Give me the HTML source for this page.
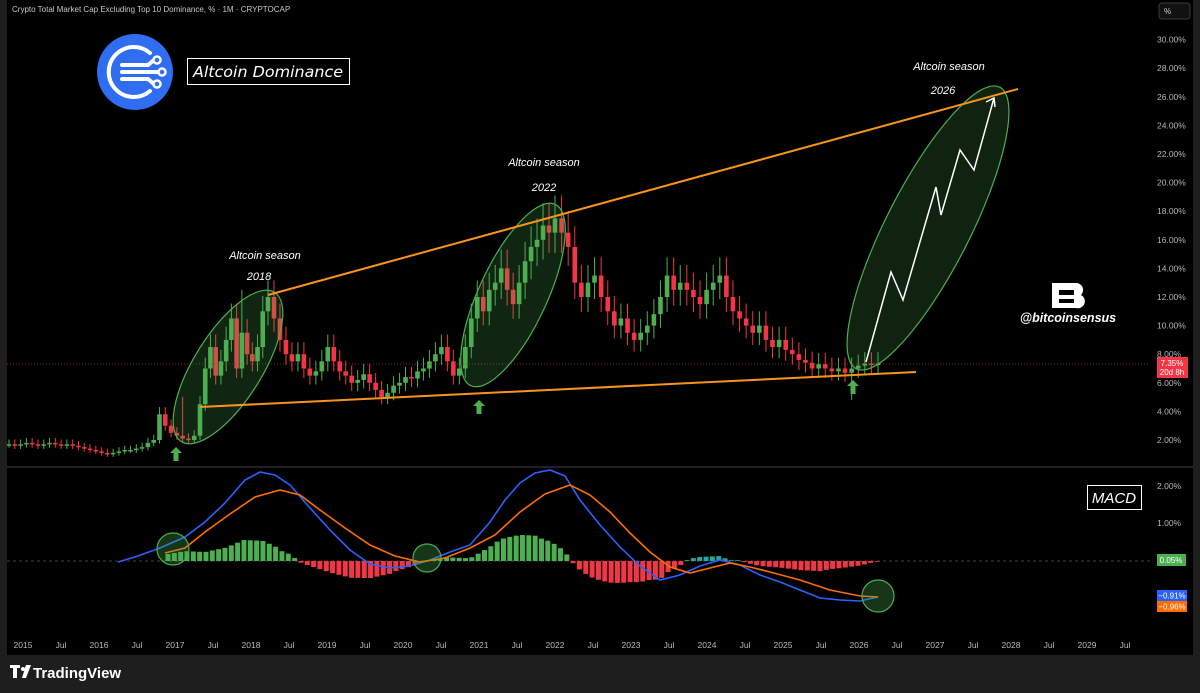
<!DOCTYPE html>
<html><head><meta charset="utf-8"><style>
html,body{margin:0;padding:0;background:#1e1e1e;width:1200px;height:693px;overflow:hidden;font-family:"Liberation Sans",sans-serif}
svg{position:absolute;left:0;top:0}
</style></head><body>
<svg id="s" width="1200" height="693" viewBox="0 0 1200 693" xmlns="http://www.w3.org/2000/svg">
<rect x="0" y="0" width="1200" height="693" fill="#1e1e1e"/>
<rect x="7" y="0" width="1186" height="655" fill="#000"/>
<line x1="7" y1="467" x2="1193" y2="467" fill="none" stroke="#2a2a2a" stroke-width="1.5"/>
<text x="12" y="12" fill="#c8c8c8" font-size="8">Crypto Total Market Cap Excluding Top 10 Dominance, % · 1M · CRYPTOCAP</text>
<rect x="1159" y="3" width="31" height="16" rx="3" fill="#111" stroke="#3a3a3a"/>
<text x="1164" y="14" fill="#ccc" font-size="8">%</text>
<g id="axis" fill="#b8b8b8" font-size="8.5"></g>
<g id="candles"></g>
<line x1="7" y1="364" x2="1150" y2="364" stroke="#b03030" stroke-width="0.8" stroke-dasharray="1,2"/>
<line x1="7" y1="561" x2="1150" y2="561" stroke="#555" stroke-width="0.8" stroke-dasharray="3,3"/>
<ellipse cx="228" cy="367" rx="34" ry="88" transform="rotate(32 228 367)" fill="rgba(76,175,80,0.22)" stroke="#4caf50" stroke-width="1.2"/>
<ellipse cx="513" cy="295" rx="34" ry="100" transform="rotate(25 513 295)" fill="rgba(76,175,80,0.22)" stroke="#4caf50" stroke-width="1.2"/>
<ellipse cx="928" cy="228" rx="42" ry="158" transform="rotate(27 928 228)" fill="rgba(76,175,80,0.2)" stroke="#4caf50" stroke-width="1.2"/>
<line x1="268" y1="295" x2="1018" y2="89" stroke="#f7941d" stroke-width="2"/>
<line x1="200" y1="407" x2="916" y2="372" stroke="#f7941d" stroke-width="2"/>
<polyline points="866,362 891,272 903,300 936,187 941,215 960,150 974,170 994,98" fill="none" stroke="#fff" stroke-width="1.5"/>
<polyline points="986,102 994,98 995,107" fill="none" stroke="#fff" stroke-width="1.5"/>
<g fill="#4caf50">
<path d="M176 447 l6 6 h-3.5 v8 h-5 v-8 h-3.5z"/>
<path d="M479 400 l6 6 h-3.5 v8 h-5 v-8 h-3.5z"/>
<path d="M853 380 l6 6 h-3.5 v8 h-5 v-8 h-3.5z"/>
</g>
<g fill="#fff" font-size="11" font-style="italic" text-anchor="middle">
<text x="265" y="259">Altcoin season</text><text x="259" y="280">2018</text>
<text x="544" y="166">Altcoin season</text><text x="544" y="191">2022</text>
<text x="949" y="70">Altcoin season</text><text x="943" y="94">2026</text>
</g>
<circle cx="135" cy="72" r="38" fill="#2f6ef2"/>
<g fill="none" stroke="#fff" stroke-width="4" stroke-linecap="round">
<path d="M150 53 A25 25 0 1 0 150 91"/>
<path d="M122 65 H148 L154 60"/><path d="M122 72 H158"/><path d="M122 79 H148 L154 84"/>
</g>
<g fill="#2f6ef2" stroke="#fff" stroke-width="2.5"><circle cx="157" cy="60" r="3.5"/><circle cx="162" cy="72" r="3.5"/><circle cx="157" cy="84" r="3.5"/></g>
<rect x="187.5" y="58.5" width="162" height="26" fill="#000" stroke="#fff"/>
<text x="268" y="77" fill="#fff" font-size="15" font-style="italic" font-family="DejaVu Sans" text-anchor="middle" textLength="150" lengthAdjust="spacingAndGlyphs">Altcoin Dominance</text>
<path d="M1052 283 h24 a7 7 0 0 1 5 12 a7 7 0 0 1 -5 13 h-24z M1059 290 v5 h15 v-5z M1059 299 v4 h15 v-4z" fill="#fff" fill-rule="evenodd"/>
<text x="1068" y="322" fill="#fff" font-size="12.5" font-style="italic" font-weight="bold" text-anchor="middle">@bitcoinsensus</text>
<rect x="1087.5" y="485.5" width="54" height="24" fill="#000" stroke="#fff"/>
<text x="1114" y="503" fill="#fff" font-size="15" font-style="italic" text-anchor="middle">MACD</text>
<g id="macd"></g>
<g fill="none" stroke="#4caf50" stroke-width="1.2">
<circle cx="173" cy="549" r="16" fill="rgba(76,175,80,0.3)"/>
<circle cx="427" cy="558" r="14" fill="rgba(76,175,80,0.3)"/>
<circle cx="878" cy="596" r="16" fill="rgba(76,175,80,0.3)"/>
</g>
<rect x="1157" y="357" width="31" height="21" fill="#f23645"/>
<text x="1172" y="366" fill="#fff" font-size="8" text-anchor="middle">7.35%</text>
<text x="1172" y="375" fill="#fff" font-size="8" text-anchor="middle">20d 8h</text>
<rect x="1157" y="554" width="29" height="12" fill="#4caf50"/>
<text x="1171" y="563" fill="#fff" font-size="8" text-anchor="middle">0.05%</text>
<rect x="1157" y="590" width="30" height="11" fill="#2962ff"/>
<text x="1172" y="598.5" fill="#fff" font-size="8" text-anchor="middle">−0.91%</text>
<rect x="1157" y="601" width="30" height="11" fill="#ff6d00"/>
<text x="1172" y="609.5" fill="#fff" font-size="8" text-anchor="middle">−0.96%</text>
<g fill="#fff"><path d="M10 665 h10 v3 h-3 v10 h-4 v-10 h-3z"/><circle cx="23" cy="669" r="2"/><path d="M26 665 h5 l-5 13 h-4z"/></g>
<text x="33" y="678" fill="#fff" font-size="15" font-weight="bold">TradingView</text>
</svg>
<script>
var NS="http://www.w3.org/2000/svg";
function el(p,t,a){var e=document.createElementNS(NS,t);for(var k in a)e.setAttribute(k,a[k]);p.appendChild(e);return e;}
var ax=document.getElementById('axis');
for(var v=2;v<=30;v+=2){var y=468.6-14.3*v;var t=el(ax,'text',{x:1157,y:y+3});t.textContent=v.toFixed(2)+'%';}
var t1=el(ax,'text',{x:1157,y:489});t1.textContent='2.00%';
var t2=el(ax,'text',{x:1157,y:526});t2.textContent='1.00%';
var yrs=['2015','Jul','2016','Jul','2017','Jul','2018','Jul','2019','Jul','2020','Jul','2021','Jul','2022','Jul','2023','Jul','2024','Jul','2025','Jul','2026','Jul','2027','Jul','2028','Jul','2029','Jul'];
for(var i=0;i<yrs.length;i++){var t=el(ax,'text',{x:23+i*38,y:648,'text-anchor':'middle'});t.textContent=yrs[i];}
var c=[1.7,1.6,1.7,1.8,1.7,1.6,1.7,1.8,1.7,1.6,1.7,1.6,
1.5,1.4,1.3,1.2,1.1,1.0,1.1,1.2,1.3,1.3,1.4,1.5,
1.8,2.0,3.8,3.0,2.5,2.3,2.1,2.0,2.3,4.5,7.0,8.5,
6.5,7.5,9.0,10.5,7.0,9.5,8.0,7.5,8.5,11.0,12.0,10.5,
9.0,8.0,7.5,8.0,7.0,6.5,6.8,7.5,8.5,7.5,6.8,6.5,
6.0,6.2,6.6,6.0,5.5,5.0,5.3,5.8,6.0,6.4,6.3,6.8,
7.0,7.5,8.0,8.5,7.5,6.5,7.0,8.5,10.5,12.0,11.0,12.5,
13.0,14.0,12.5,11.5,13.0,14.5,15.5,16.0,17.0,16.5,17.5,16.5,
15.5,13.0,12.0,13.0,13.5,12.0,11.0,10.0,10.5,9.5,9.0,9.5,
10.0,10.8,12.0,13.5,12.5,13.0,12.5,12.0,11.5,12.5,13.0,13.5,
12.0,11.0,10.5,10.0,9.5,10.0,9.0,8.5,9.0,8.3,8.0,7.6,
7.4,7.0,7.3,7.0,6.8,7.0,6.7,7.0,7.2,7.35,7.3,7.35];
var kf=[[0,9],[33,200],[46,268],[94,555],[143,878]];
function X(i){for(var k=1;k<kf.length;k++){if(i<=kf[k][0]){var a=kf[k-1],b=kf[k];return a[1]+(i-a[0])*(b[1]-a[1])/(b[0]-a[0]);}}return 878;}
var g=document.getElementById('candles');
var o=1.7;
for(var i=0;i<c.length;i++){
var x=X(i);var cl=c[i];var up=cl>=o;
var hi=Math.max(o,cl)*1.08+0.2,lo=Math.min(o,cl)*0.92-0.1;
if(i==41)hi=12.5;if(i==30)hi=5.0;if(i==139)lo=4.8;
var Y=function(v){return 468.6-14.3*v;};
var col=up?'#4caf50':'#f23645';
el(g,'line',{x1:x,y1:Y(hi),x2:x,y2:Y(lo),stroke:col,'stroke-width':1});
var yt=Y(Math.max(o,cl)),yb=Y(Math.min(o,cl));
el(g,'rect',{x:x-2.3,y:yt,width:4.6,height:Math.max(1.5,yb-yt),fill:col});
o=cl;}
var blue=[[118,562],[135,557],[160,548],[185,537],[205,522],[225,503],[245,480],[260,472],[275,475],[290,485],[310,508],[330,530],[350,550],[370,564],[390,568],[410,566],[430,560],[450,552],[470,545],[490,522],[505,500],[520,483],[535,473],[550,470],[565,476],[580,500],[600,525],[620,547],[640,566],[660,580],[680,575],[700,566],[720,560],[740,565],[760,575],[780,582],[800,590],[820,598],[840,600],[860,601],[878,597]];
var orng=[[165,553],[185,548],[205,532],[230,514],[255,497],[280,490],[300,495],[320,510],[345,528],[370,545],[395,556],[420,562],[445,558],[470,548],[495,535],[520,512],[545,494],[570,485],[590,495],[610,512],[630,533],[650,552],[670,567],[690,573],[710,568],[730,563],[750,567],[770,572],[800,580],[830,590],[860,596],[878,597]];
function interp(a,x){if(x<=a[0][0])return a[0][1];for(var i=1;i<a.length;i++){if(x<=a[i][0]){var t=(x-a[i-1][0])/(a[i][0]-a[i-1][0]);return a[i-1][1]+t*(a[i][1]-a[i-1][1]);}}return a[a.length-1][1];}
var m=document.getElementById('macd');
for(var x=168;x<=880;x+=6.33){var h=(interp(orng,x)-interp(blue,x))*0.9;
var col=h>0?'#4caf50':'#f23645';if(x>690&&x<745&&h>0)col='#26a69a';
if(Math.abs(h)<0.8)h=h<0?-0.8:0.8;
el(m,'rect',{x:x-2.5,y:h>0?561-h:561,width:5,height:Math.abs(h),fill:col});}
function pl(a,c){el(m,'polyline',{points:a.map(function(p){return p.join(',')}).join(' '),fill:'none',stroke:c,'stroke-width':1.6});}
pl(blue,'#2962ff');pl(orng,'#ff6d00');
</script>
</body></html>
